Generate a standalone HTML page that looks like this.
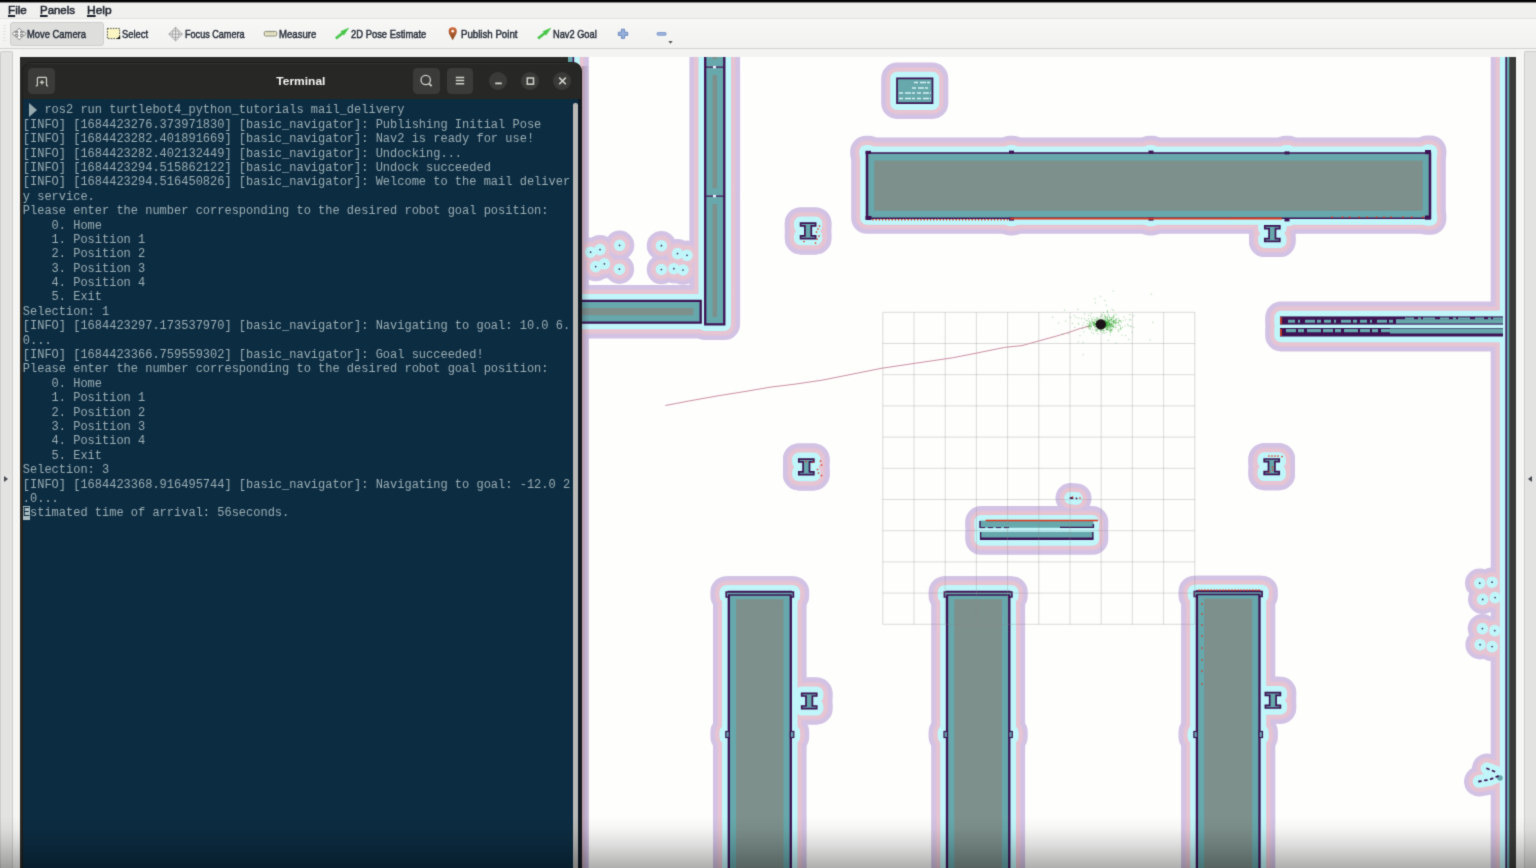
<!DOCTYPE html>
<html><head><meta charset="utf-8"><title>RViz</title>
<style>
*{box-sizing:border-box;margin:0;padding:0}
html,body{width:1536px;height:868px;overflow:hidden;background:#f0f0ef;font-family:"Liberation Sans",sans-serif;}
#root{position:relative;width:1536px;height:868px;overflow:hidden;background:#f1f1f0;filter:url(#soft)}
.abs{position:absolute}
#topbar{left:0;top:0;width:1536px;height:3px;background:linear-gradient(to bottom,#030303 0,#030303 2px,#8e8e8d 2px,#8e8e8d 3px)}
#menubar{left:0;top:3px;width:1536px;height:15px;background:#f0f0ef}
#menubar span{position:absolute;top:-.6px;font-size:11.6px;color:#2a303a;line-height:15px;display:inline-block;transform-origin:0 50%}
#menubar u{text-decoration:underline;text-underline-offset:1px;text-decoration-thickness:1.6px}
#menubar span{-webkit-text-stroke:.5px #1b212b;color:#1b212b}
.tb{-webkit-text-stroke:.42px #1e2530;color:#1e2530}
#toolbar{left:0;top:18px;width:1536px;height:30.5px;background:linear-gradient(to bottom,#f7f7f6,#f2f2f1);border-top:1px solid #e2e2e0;border-bottom:1px solid #d2d2d0}
.tb{position:absolute;top:9.2px;font-size:10.4px;line-height:14px;color:#2a313c;white-space:nowrap;display:inline-block;transform-origin:0 50%}
#mvbtn{left:10.2px;top:3.2px;width:93.8px;height:24.2px;background:#dededd;border:1px solid #cfcfcd;border-radius:3px}
#below{left:0;top:49px;width:1536px;height:8px;background:#f3f3f2}
#lgut{left:0;top:50.5px;width:12.5px;height:830px;background:#e3e3e2;border:1px solid #cdcdcb;border-radius:2px}
#lstrip{left:12.5px;top:49px;width:8px;height:819px;background:#f5f5f4}
#rstrip{left:1516px;top:49px;width:7.5px;height:819px;background:#f6f6f5}
#rgut{left:1523.5px;top:50.5px;width:13px;height:830px;background:#e3e3e2;border:1px solid #cdcdcb;border-radius:2px}
.arr{position:absolute;width:0;height:0;border-top:3.5px solid transparent;border-bottom:3.5px solid transparent}
#map{position:absolute;left:0;top:0}
/* terminal */
#tshadow{left:20px;top:57px;width:547.5px;height:811px;background:#2a2a28}
#twin{left:21.8px;top:62.4px;width:559.8px;height:820px;background:#262624;border-radius:9px 9px 0 0;border:1px solid #1c1c1a;overflow:hidden}
#thead{left:0;top:0;width:560px;height:37px;background:#272725;box-shadow:inset 0 1px 0 #1b1b19,inset 0 2px 0 #32322e}
#ttitle{width:558px;top:11.2px;text-align:center;color:#f4f4f2;font-weight:bold;font-size:11px;line-height:14px;transform:scaleX(1.09);transform-origin:280.4px 50%;left:.7px}
.hb{position:absolute;background:#3b3b39;border-radius:4.5px}
.cb{position:absolute;width:18.4px;height:18.4px;border-radius:50%;background:#3a3a38}
#tbody{left:0;top:37px;width:556.4px;height:790px;background:#0c2c42}
#tright{left:556.4px;top:37px;width:4px;height:790px;background:#101a26}
#ttext{position:absolute;left:1px;top:4px;font-family:"Liberation Mono",monospace;font-size:12px;line-height:14.39px;color:#9aadb2;white-space:pre;letter-spacing:0}
.l0{position:relative;top:-.9px;display:inline-block;height:14.39px;line-height:14.39px;vertical-align:top}
.pr{position:absolute;left:6.6px;top:.3px;width:0;height:0;border-left:8.2px solid #98abb0;border-top:7px solid transparent;border-bottom:7px solid transparent}
.cur{background:#a9bcc0;color:#0c2c42}
#tscroll{left:551.5px;top:40.6px;width:4.9px;height:790px;background:#b9b9b8;border-radius:2.2px 2.2px 0 0}
#tleft{left:0;top:37px;width:1.2px;height:790px;background:#0a1e2e}
#vig{left:0;top:816px;width:1536px;height:52px;background:linear-gradient(to bottom,rgba(0,0,0,0) 0%,rgba(0,0,0,.035) 25%,rgba(0,0,0,.13) 55%,rgba(0,0,0,.31) 100%);pointer-events:none}
#tsh{left:581.6px;top:66px;width:8px;height:802px;background:linear-gradient(to right,rgba(20,10,30,.22),rgba(20,10,30,.1) 50%,rgba(20,10,30,0))}
</style></head>
<body><svg width="0" height="0" style="position:absolute"><defs><filter id="soft" x="0" y="0" width="100%" height="100%" color-interpolation-filters="sRGB"><feConvolveMatrix order="3" kernelMatrix="0.0192 0.1001 0.0192 0.1001 0.5228 0.1001 0.0192 0.1001 0.0192" divisor="1" edgeMode="duplicate" preserveAlpha="true"/></filter></defs></svg><div id="root">
<div class="abs" id="below"></div>
<svg id="map" width="1536" height="868" viewBox="0 0 1536 868">
<defs>
<path id="big" d="M540 30H573V900H540ZM705.2 30H724.3V66.6H705.2ZM705.2 67.6H724.3V195.6H705.2ZM705.2 196.6H724.3V324.3H705.2ZM540 300.8H700.7V322.6H540ZM867 153.2H1430V218H867ZM728.8 592H790.8V900H728.8ZM947 592H1009.3V900H947ZM1196.9 591.5H1259.5V900H1196.9ZM1506.5 30H1560V900H1506.5Z"/>
<path id="bigo" d="M540 30H573V900H540ZM540 300.8H700.7V322.6H540ZM728.8 592H790.8V900H728.8ZM947 592H1009.3V900H947ZM1196.9 591.5H1259.5V900H1196.9ZM1506.5 30H1560V900H1506.5ZM705.2 30H724.3V324.3H705.2Z"/>
<path id="thin" d="M897 78.4H932.5V103.2H897ZM800.6 223.2H815.6V225.9H811.3V235.9H815.6V238.6H800.6V235.9H804.9V225.9H800.6ZM1264.8 225.9H1279.8V228.6H1275.5V238.6H1279.8V241.3H1264.8V238.6H1269.1V228.6H1264.8ZM798.8 459.2H813.8V461.9H809.5V471.9H813.8V474.6H798.8V471.9H803.1V461.9H798.8ZM1264.2 459H1279.2V461.7H1274.9V471.7H1279.2V474.4H1264.2V471.7H1268.5V461.7H1264.2ZM801.7 693.3H816.7V696H812.4V706H816.7V708.7H801.7V706H806V696H801.7ZM1265.4 692.6H1280.4V695.3H1276.1V705.3H1280.4V708H1265.4V705.3H1269.7V695.3H1265.4Z"/>
<path id="shelf" d="M1281 317.4H1503V323.6H1281ZM1281 329.2H1503V335.6H1281ZM981 521.8H1092.5V526.8H981ZM981 533H1092.5V539H981Z"/>
<path id="dots" d="M590.6 252.2h.01M600 249.6h.01M619.6 245.3h.01M595.7 266.6h.01M604.4 263.8h.01M619.4 269.2h.01M661.4 245.7h.01M677.5 253.6h.01M687 255.3h.01M661.4 269.5h.01M673.9 268.7h.01M683 270h.01M1479.7 583.2h.01M1492.1 582.2h.01M1482.7 599.4h.01M1495.1 597.6h.01M1482.4 628.6h.01M1494.7 630.6h.01M1480.1 644.7h.01M1492.1 646.6h.01"/>
<path id="blob" d="M1070.5 498L1076.5 498.4M1479 781.5L1490 779.5L1501 775M1487 768.5L1497 772.5"/>
<path id="extra" d="M726.2 592H793.4V596H726.2ZM726.2 732H728.8V737H726.2ZM790.8 732H793.4V737H790.8ZM944.4 592H1011.9V596H944.4ZM944.4 732H947V737H944.4ZM1009.3 732H1011.9V737H1009.3ZM1194.3 591.5H1262.1V595.5H1194.3ZM1194.3 732H1196.9V737H1194.3ZM1259.5 732H1262.1V737H1259.5ZM1010 151.6H1013V153H1010ZM1010 218H1013V219.6H1010ZM1149.3 151.6H1152.3V153H1149.3ZM1149.3 218H1152.3V219.6H1149.3ZM1285.5 151.6H1288.5V153H1285.5ZM1285.5 218H1288.5V219.6H1285.5ZM866 151.6H869V154H866ZM1427 151.2H1430.6V154H1427ZM1427 216H1430.6V219H1427Z"/>
<path id="ibox" d="M800.6 223.2H815.6V238.6H800.6ZM1264.8 225.9H1279.8V241.3H1264.8ZM798.8 459.2H813.8V474.6H798.8ZM1264.2 459H1279.2V474.4H1264.2ZM801.7 693.3H816.7V708.7H801.7ZM1265.4 692.6H1280.4V708H1265.4Z"/>
<filter id="bl" x="-5%" y="-5%" width="110%" height="110%"><feGaussianBlur stdDeviation=".55"/></filter>
<clipPath id="cb"><use href="#big"/></clipPath>
<clipPath id="view"><rect x="560" y="57" width="956" height="811"/></clipPath>
</defs>
<g clip-path="url(#view)">
<rect x="560" y="57" width="956" height="811" fill="#fefefd"/>
<g fill="none" stroke-linejoin="round" stroke-linecap="round" filter="url(#bl)">
 <g stroke="#d2c2e4"><use href="#big" stroke-width="31.6"/><use href="#extra" stroke-width="31.6"/><use href="#ibox" stroke-width="31.6"/><use href="#thin" stroke-width="31.6"/><use href="#shelf" stroke-width="31.6"/><use href="#dots" stroke-width="29.4"/><use href="#blob" stroke-width="30"/></g>
 <g stroke="#dcc3dc"><use href="#big" stroke-width="23.6"/><use href="#extra" stroke-width="23.6"/><use href="#ibox" stroke-width="23.6"/><use href="#thin" stroke-width="23.2"/><use href="#shelf" stroke-width="23.2"/><use href="#dots" stroke-width="22"/><use href="#blob" stroke-width="22.6"/></g>
 <g stroke="#e7c4d1"><use href="#big" stroke-width="20.6"/><use href="#extra" stroke-width="20.6"/><use href="#ibox" stroke-width="20.6"/><use href="#thin" stroke-width="20.6"/><use href="#shelf" stroke-width="20.6"/><use href="#dots" stroke-width="19.4"/><use href="#blob" stroke-width="20"/></g>
 <g stroke="#c0f6fa"><use href="#big" stroke-width="13.4"/><use href="#extra" stroke-width="13.4"/><use href="#thin" stroke-width="13.4"/><use href="#shelf" stroke-width="13.4"/><use href="#dots" stroke-width="11.6"/><use href="#blob" stroke-width="12.6"/></g>
</g>
<use href="#big" fill="#7d908c"/>
<g clip-path="url(#cb)"><use href="#big" fill="none" stroke="#66a8ac" stroke-width="14.6"/></g>
<use href="#bigo" fill="none" stroke="#3d1254" stroke-width="2.3"/>
<path d="M867 152.4V219M1430 152.4V219" stroke="#3d1254" stroke-width="2.5" fill="none"/>
<path d="M867 153H1430M867 218.2H1430M705.2 67.1H724.3M705.2 196.1H724.3" stroke="#3d1254" stroke-width="1.4" fill="none"/>
<use href="#thin" fill="#66a8ac" stroke="#3d1254" stroke-width="1.7"/>
<g>
<rect x="1280" y="316.4" width="223" height="8.2" fill="#3d1254"/>
<path d="M1288 321.2H1400" stroke="#66a8ac" stroke-width="3" stroke-dasharray="7 3 2 5 10 2 4 3"/>
<path d="M1396 321.4H1503" stroke="#66a8ac" stroke-width="4.4"/>
<path d="M1405 318.6H1503" stroke="#66a8ac" stroke-width="2" stroke-dasharray="9 4 3 2 12 5"/>
<rect x="1280" y="328" width="223" height="8.5" fill="#3d1254"/>
<path d="M1286 330.6H1400" stroke="#66a8ac" stroke-width="3.2" stroke-dasharray="10 2 6 3 14 2"/>
<path d="M1390 331H1503" stroke="#66a8ac" stroke-width="5"/>
<path d="M1281 317v7M1281 329v7" stroke="#d8401f" stroke-width="1.6"/>
<rect x="980" y="520.6" width="113.4" height="7.2" fill="#66a8ac"/>
<path d="M980 521v7M1093.4 524v4M1060 527.4H1093.4" stroke="#3d1254" stroke-width="1.4" fill="none"/>
<path d="M980 527.6H1010" stroke="#3d1254" stroke-width="1" stroke-dasharray="5 3"/>
<rect x="980" y="531.9" width="113.4" height="8" fill="#66a8ac"/>
<path d="M980 538.8H1093.4" stroke="#3d1254" stroke-width="2.4"/>
<path d="M980.6 532v7M1092.8 532v7" stroke="#3d1254" stroke-width="1.3"/>
</g>
<use href="#dots" fill="none" stroke="#3a3060" stroke-width="1.7" stroke-linecap="round"/>
<circle cx="1500" cy="778" r="2.8" fill="#66a8ac"/>
<use href="#blob" fill="none" stroke="#3d1254" stroke-width="1.8" stroke-linecap="round" stroke-dasharray="2 4"/>
<rect x="865.5" y="150.8" width="5.5" height="3.2" fill="#3d1254"/>
<rect x="1425" y="150" width="6" height="4.2" fill="#3d1254"/>
<rect x="1425" y="215.5" width="6" height="4.2" fill="#3d1254"/>
<rect x="865.5" y="216" width="6" height="4" fill="#3d1254"/>
<rect x="1009" y="150.6" width="5" height="3" fill="#3d1254"/>
<rect x="1148.5" y="150.6" width="5" height="3" fill="#3d1254"/>
<rect x="1284.5" y="151.4" width="5" height="3" fill="#3d1254"/>
<rect x="1009" y="217.6" width="5" height="3" fill="#3d1254"/>
<rect x="1148.5" y="217.6" width="5" height="3" fill="#3d1254"/>
<rect x="1284.5" y="218.4" width="5" height="3" fill="#3d1254"/>
<path d="M726.1999999999999 592H793.4V597H790.8V595H728.8V597H726.1999999999999Z" fill="#66a8ac" stroke="#3d1254" stroke-width="1.6"/>
<rect x="725.8" y="731.5" width="3.4" height="6" fill="#66a8ac" stroke="#3d1254" stroke-width="1.2"/>
<rect x="790.4" y="731.5" width="3.4" height="6" fill="#66a8ac" stroke="#3d1254" stroke-width="1.2"/>
<path d="M944.4 592H1011.9V597H1009.3V595H947V597H944.4Z" fill="#66a8ac" stroke="#3d1254" stroke-width="1.6"/>
<rect x="944" y="731.5" width="3.4" height="6" fill="#66a8ac" stroke="#3d1254" stroke-width="1.2"/>
<rect x="1008.9" y="731.5" width="3.4" height="6" fill="#66a8ac" stroke="#3d1254" stroke-width="1.2"/>
<path d="M1194.3000000000002 591.5H1262.1V596.5H1259.5V594.5H1196.9V596.5H1194.3000000000002Z" fill="#66a8ac" stroke="#3d1254" stroke-width="1.6"/>
<rect x="1193.9" y="731.5" width="3.4" height="6" fill="#66a8ac" stroke="#3d1254" stroke-width="1.2"/>
<rect x="1259.1" y="731.5" width="3.4" height="6" fill="#66a8ac" stroke="#3d1254" stroke-width="1.2"/>
<path d="M914 82.6H930" stroke="#d6f0f1" stroke-width="1.5" stroke-dasharray="4 2 6 1 3 2"/>
<path d="M912 88H930" stroke="#d6f0f1" stroke-width="1.5" stroke-dasharray="4 2 6 1 3 2"/>
<path d="M899 93H931" stroke="#d6f0f1" stroke-width="1.5" stroke-dasharray="4 2 6 1 3 2"/>
<path d="M899 98.4H931" stroke="#d6f0f1" stroke-width="1.5" stroke-dasharray="4 2 6 1 3 2"/>
<rect x="567.6" y="56" width="5" height="8" fill="#66a8ac"/>
<rect x="713" y="65.89999999999999" width="3" height="2.4" fill="#eef"/>
<rect x="713" y="194.9" width="3" height="2.4" fill="#eef"/>
<path d="M873.0 219.6h.01M876.2 219.6h.01M879.4 219.6h.01M882.6 219.6h.01M885.8 219.6h.01M889.0 219.6h.01M892.2 219.6h.01M895.4 219.6h.01M898.6 219.6h.01M901.8 219.6h.01M905.0 219.6h.01M908.2 219.6h.01M911.4 219.6h.01M914.6 219.6h.01M917.8 219.6h.01M921.0 219.6h.01M924.2 219.6h.01M927.4 219.6h.01M930.6 219.6h.01M933.8 219.6h.01M937.0 219.6h.01M940.2 219.6h.01M943.4 219.6h.01M946.6 219.6h.01M949.8 219.6h.01M953.0 219.6h.01M956.2 219.6h.01M959.4 219.6h.01M962.6 219.6h.01M965.8 219.6h.01M969.0 219.6h.01M972.2 219.6h.01M975.4 219.6h.01M978.6 219.6h.01M981.8 219.6h.01M985.0 219.6h.01M988.2 219.6h.01M991.4 219.6h.01M994.6 219.6h.01M997.8 219.6h.01M1001.0 219.6h.01M1004.2 219.6h.01M1007.4 219.6h.01M1232.0 218.2h.01M1235.0 218.2h.01M1238.0 218.2h.01M1241.0 218.2h.01M1244.0 218.2h.01M1247.0 218.2h.01M1250.0 218.2h.01M1253.0 218.2h.01M1256.0 218.2h.01M1259.0 218.2h.01M1262.0 218.2h.01M1265.0 218.2h.01M1268.0 218.2h.01M1271.0 218.2h.01M1274.0 218.2h.01M1277.0 218.2h.01M1280.0 218.2h.01M1332.0 217.2h.01M1342.4 217.2h.01M1349.6 217.2h.01M1359.2 217.2h.01M1367.3 217.2h.01M1376.5 217.2h.01M1384.0 217.2h.01M1391.1 217.2h.01M1403.0 217.2h.01M1411.6 217.2h.01M1423.0 217.2h.01M1199.0 590.2h.01M1202.0 590.2h.01M1205.0 590.2h.01M1208.0 590.2h.01M1211.0 590.2h.01M1214.0 590.2h.01M1217.0 590.2h.01M1220.0 590.2h.01M1223.0 590.2h.01M1226.0 590.2h.01M1229.0 590.2h.01M1232.0 590.2h.01M1235.0 590.2h.01M1238.0 590.2h.01M1241.0 590.2h.01M1244.0 590.2h.01M1247.0 590.2h.01M1250.0 590.2h.01M1253.0 590.2h.01M1256.0 590.2h.01M1259.0 590.2h.01M1202.0 604.0h.01M1202.0 614.0h.01M1202.0 625.0h.01M1202.0 636.0h.01M1202.0 648.0h.01M1202.0 660.0h.01M1202.0 671.0h.01M1202.0 684.0h.01M819.5 226.0h.01M818.0 229.0h.01M816.5 232.0h.01M819.0 236.0h.01M817.0 239.0h.01M804.0 241.5h.01M815.5 243.0h.01M820.5 461.0h.01M821.5 465.0h.01M817.5 469.5h.01M818.5 473.0h.01M821.5 475.5h.01M806.0 461.5h.01M813.2 462.0h.01M1269.0 456.0h.01M1272.0 456.0h.01M1275.0 456.0h.01M1278.0 456.0h.01M1282.0 456.5h.01M1272.5 467.0h.01M1272.5 470.0h.01M1269.0 472.0h.01M1072.5 497.0h.01M1080.0 498.0h.01" fill="none" stroke="#e0371c" stroke-width="1.7" stroke-linecap="round"/>
<path d="M1010 218.6H1282" stroke="#d9391f" stroke-width="1.6"/>
<path d="M985.6 520.4H1098" stroke="#e0371c" stroke-width="1.5"/>
<path d="M882.8 312.3V624.3M882.8 312.3H1194.8M914.0 312.3V624.3M882.8 343.5H1194.8M945.2 312.3V624.3M882.8 374.7H1194.8M976.4 312.3V624.3M882.8 405.9H1194.8M1007.6 312.3V624.3M882.8 437.1H1194.8M1038.8 312.3V624.3M882.8 468.3H1194.8M1070.0 312.3V624.3M882.8 499.5H1194.8M1101.2 312.3V624.3M882.8 530.7H1194.8M1132.4 312.3V624.3M882.8 561.9H1194.8M1163.6 312.3V624.3M882.8 593.1H1194.8M1194.8 312.3V624.3M882.8 624.3H1194.8" fill="none" stroke="#8c8c8c" stroke-opacity=".3" stroke-width="1"/>
<path d="M665.3 405.5L690 400.8L718 395.8L745 391.5L770 387.2L796 384L822 380.2L852 374.2L882 368.2L917 363L952.5 357.8L978 352.8L1004.6 347.4L1022 345.6L1040 340.6L1056 336.2L1070 332L1080 328.5L1090 326" fill="none" stroke="#cc8fa3" stroke-width="1"/>
<path d="M1101.7 324.4h.9M1100.4 326.3h.9M1112.7 326.9h.9M1106.0 322.6h.9M1084.2 318.7h.9M1119.9 325.6h.9M1101.9 325.7h.9M1096.3 322.3h.9M1105.7 325.1h.9M1088.0 328.1h.9M1105.2 320.7h.9M1092.8 322.5h.9M1102.4 324.9h.9M1103.8 322.2h.9M1104.4 316.3h.9M1098.1 326.4h.9M1107.1 321.8h.9M1102.6 323.4h.9M1107.4 316.8h.9M1099.2 320.8h.9M1105.6 324.6h.9M1100.2 327.7h.9M1093.7 324.3h.9M1110.8 321.3h.9M1118.2 323.1h.9M1103.3 327.5h.9M1108.8 323.4h.9M1100.2 323.0h.9M1095.8 321.0h.9M1105.8 320.0h.9M1110.0 326.0h.9M1105.3 325.2h.9M1104.8 324.5h.9M1102.9 325.7h.9M1101.9 325.4h.9M1111.1 323.9h.9M1113.0 327.4h.9M1102.4 326.0h.9M1077.9 323.2h.9M1108.7 324.4h.9M1100.0 328.0h.9M1100.6 322.0h.9M1104.8 324.8h.9M1104.2 322.0h.9M1103.2 325.0h.9M1102.3 325.9h.9M1112.2 325.0h.9M1101.4 325.5h.9M1101.8 325.1h.9M1089.3 323.3h.9M1114.8 321.7h.9M1086.7 326.7h.9M1114.0 322.7h.9M1108.5 322.7h.9M1106.6 323.5h.9M1107.2 322.1h.9M1109.3 329.1h.9M1097.6 323.0h.9M1112.7 317.5h.9M1100.5 328.5h.9M1104.5 325.2h.9M1094.6 323.7h.9M1083.5 322.9h.9M1104.1 324.6h.9M1111.4 329.3h.9M1099.0 324.9h.9M1115.2 327.8h.9M1102.3 324.2h.9M1115.5 319.5h.9M1095.2 324.0h.9M1090.8 326.3h.9M1107.8 322.3h.9M1113.7 316.6h.9M1099.7 325.1h.9M1106.5 319.2h.9M1101.3 322.3h.9M1103.7 333.2h.9M1102.2 324.2h.9M1098.0 323.6h.9M1100.0 326.1h.9M1112.6 324.0h.9M1093.7 324.9h.9M1103.9 325.8h.9M1102.9 323.6h.9M1112.6 316.8h.9M1105.6 322.4h.9M1101.6 322.7h.9M1102.4 322.6h.9M1120.3 327.8h.9M1094.6 326.4h.9M1102.7 324.2h.9M1106.1 326.1h.9M1103.9 322.5h.9M1107.6 328.7h.9M1102.8 323.6h.9M1101.0 324.1h.9M1096.4 324.8h.9M1091.8 321.4h.9M1101.9 319.3h.9M1098.6 327.0h.9M1103.0 330.6h.9M1106.1 321.8h.9M1103.2 324.2h.9M1100.7 327.0h.9M1102.6 330.2h.9M1102.8 324.8h.9M1106.5 328.8h.9M1103.8 324.8h.9M1101.9 325.2h.9M1088.9 321.7h.9M1096.0 324.0h.9M1118.1 331.5h.9M1118.2 318.2h.9M1108.3 320.6h.9M1109.1 317.3h.9M1111.2 319.7h.9M1103.1 324.0h.9M1102.5 322.4h.9M1089.8 326.3h.9M1100.6 324.0h.9M1101.9 323.4h.9M1102.0 325.2h.9M1096.6 323.4h.9M1099.5 319.9h.9M1103.6 325.0h.9M1096.5 330.7h.9M1099.3 320.9h.9M1097.1 329.8h.9M1106.7 323.8h.9M1129.5 320.0h.9M1087.8 325.6h.9M1109.7 324.5h.9M1111.6 324.5h.9M1089.9 322.9h.9M1103.1 324.4h.9M1101.2 324.5h.9M1101.1 326.5h.9M1102.9 323.6h.9M1113.5 320.5h.9M1096.8 326.6h.9M1102.6 327.5h.9M1102.5 326.0h.9M1103.6 324.6h.9M1113.6 322.0h.9M1114.8 320.4h.9M1107.2 323.7h.9M1100.3 326.5h.9M1106.2 326.4h.9M1109.9 323.8h.9M1096.3 329.7h.9M1104.1 326.4h.9M1108.0 325.0h.9M1104.7 327.0h.9M1106.9 326.1h.9M1101.1 315.4h.9M1095.9 324.5h.9M1110.6 324.4h.9M1097.1 321.1h.9M1102.8 322.1h.9M1107.8 321.2h.9M1115.8 318.9h.9M1102.2 325.6h.9M1109.2 323.5h.9M1103.1 325.7h.9M1092.2 319.3h.9M1094.1 323.2h.9M1104.3 323.2h.9M1100.9 325.1h.9M1099.9 323.2h.9M1103.2 326.2h.9M1107.7 322.5h.9M1085.6 326.0h.9M1096.3 331.3h.9M1100.7 324.0h.9M1101.3 329.8h.9M1100.3 324.0h.9M1095.1 324.9h.9M1092.9 333.4h.9M1104.1 326.5h.9M1104.2 326.6h.9M1107.2 327.8h.9M1107.3 324.2h.9M1110.9 323.1h.9M1115.1 323.8h.9M1105.5 321.8h.9M1099.3 325.7h.9M1102.5 322.9h.9M1118.5 330.0h.9M1110.0 319.6h.9M1098.8 325.9h.9M1106.6 324.4h.9M1103.3 323.2h.9M1105.8 323.4h.9M1115.8 320.7h.9M1100.9 329.6h.9M1103.6 327.8h.9M1113.5 323.1h.9M1104.9 323.6h.9M1097.8 322.9h.9M1103.7 323.0h.9M1093.9 321.8h.9M1097.4 326.3h.9M1105.0 326.7h.9M1099.5 326.5h.9M1097.4 333.8h.9M1099.7 323.2h.9M1103.3 323.1h.9M1111.0 318.7h.9M1097.1 322.3h.9M1106.4 329.6h.9M1094.1 321.4h.9M1110.8 324.0h.9M1105.9 325.0h.9M1107.3 319.7h.9M1109.0 327.5h.9M1081.1 318.6h.9M1100.8 327.7h.9M1120.4 329.6h.9M1105.2 325.0h.9M1095.7 321.8h.9M1098.5 321.2h.9M1105.4 326.2h.9M1099.2 323.9h.9M1107.6 326.5h.9M1100.6 327.7h.9M1099.1 324.6h.9M1083.4 331.8h.9M1110.3 330.4h.9M1089.4 328.9h.9M1108.5 327.0h.9M1112.3 326.6h.9M1096.2 324.8h.9M1120.4 328.4h.9M1103.9 324.6h.9M1074.4 327.5h.9M1098.2 325.5h.9M1102.3 323.3h.9M1108.9 320.2h.9M1101.9 323.7h.9M1102.1 323.5h.9M1103.6 320.8h.9M1104.5 324.7h.9M1096.1 324.5h.9M1098.0 322.7h.9M1088.4 324.7h.9M1104.9 317.4h.9M1106.0 325.2h.9M1100.3 324.5h.9M1101.7 323.3h.9M1112.7 325.8h.9M1105.6 324.1h.9M1104.1 326.7h.9M1125.4 319.8h.9M1118.2 321.9h.9M1101.8 323.9h.9M1111.0 330.2h.9M1101.5 324.1h.9M1105.4 327.1h.9M1104.3 327.6h.9M1096.6 323.1h.9M1093.0 322.7h.9M1104.8 323.4h.9M1103.8 323.3h.9M1102.1 322.6h.9M1102.1 324.1h.9M1115.5 322.8h.9M1102.8 325.0h.9M1088.6 326.0h.9M1100.4 322.6h.9M1103.5 324.8h.9M1102.6 324.1h.9M1090.9 326.8h.9M1103.6 322.9h.9M1104.8 318.3h.9M1088.7 321.0h.9M1093.3 325.3h.9M1105.9 323.2h.9M1105.1 325.7h.9M1115.0 322.7h.9M1096.1 322.8h.9M1100.7 325.0h.9M1105.4 321.8h.9M1102.0 314.5h.9M1099.0 325.1h.9M1102.8 324.3h.9M1111.3 318.1h.9M1104.5 319.3h.9M1102.8 323.7h.9M1102.2 324.9h.9M1118.7 321.0h.9M1102.0 328.1h.9M1097.5 318.8h.9M1096.7 317.4h.9M1099.9 320.4h.9M1107.6 325.3h.9M1108.3 325.8h.9M1106.4 325.9h.9M1098.9 321.4h.9M1094.9 328.9h.9M1119.0 320.5h.9M1117.6 329.7h.9M1108.9 323.1h.9M1091.6 320.3h.9M1106.4 324.6h.9M1108.5 324.4h.9M1099.8 321.5h.9M1109.3 320.1h.9M1098.6 325.2h.9M1095.3 323.7h.9M1120.1 328.1h.9M1103.0 321.5h.9M1099.7 324.3h.9M1101.3 326.2h.9M1108.9 323.9h.9M1103.8 324.9h.9M1102.4 321.3h.9M1095.9 324.1h.9M1114.4 326.9h.9M1105.4 322.7h.9M1102.7 325.3h.9M1102.3 316.7h.9M1100.5 328.5h.9M1104.8 325.8h.9M1097.7 323.7h.9M1103.9 325.9h.9M1111.6 319.5h.9M1103.7 324.7h.9M1107.8 326.9h.9M1122.1 327.2h.9M1107.9 315.4h.9M1108.4 325.7h.9M1110.2 326.1h.9M1097.9 322.4h.9M1099.4 324.8h.9M1093.3 322.5h.9M1103.4 326.5h.9M1101.7 322.8h.9M1088.7 327.1h.9M1105.2 320.4h.9M1101.0 330.5h.9M1097.9 322.0h.9M1101.2 322.3h.9M1130.4 326.3h.9M1104.5 323.1h.9M1093.0 322.8h.9M1095.5 319.4h.9M1109.8 332.2h.9M1106.4 322.4h.9M1102.6 324.9h.9M1099.6 325.1h.9M1104.2 326.0h.9M1078.5 324.3h.9M1107.0 326.1h.9M1088.1 318.8h.9M1103.9 324.3h.9M1107.3 318.9h.9M1104.9 321.2h.9M1099.9 331.2h.9M1109.0 324.1h.9M1102.2 328.6h.9M1096.2 318.2h.9M1116.3 319.0h.9M1110.7 329.6h.9M1119.1 324.9h.9M1105.1 325.7h.9M1103.0 322.3h.9M1108.6 330.6h.9M1102.7 318.8h.9M1101.3 325.6h.9M1099.0 320.1h.9M1102.9 328.0h.9M1110.5 325.7h.9M1090.7 323.1h.9M1101.1 324.1h.9M1092.8 324.9h.9M1112.7 325.5h.9M1097.0 319.8h.9M1104.7 323.9h.9M1101.8 322.7h.9M1105.7 323.0h.9M1106.4 330.1h.9M1099.0 322.9h.9M1096.1 324.0h.9M1113.2 322.0h.9M1102.3 324.7h.9M1106.5 321.6h.9M1110.7 325.4h.9M1104.7 324.0h.9M1108.8 321.0h.9M1095.3 320.2h.9M1100.0 321.5h.9M1106.4 325.6h.9M1097.2 321.8h.9M1104.7 318.3h.9M1102.5 324.2h.9M1110.1 323.6h.9M1104.6 320.3h.9M1093.9 325.7h.9M1121.1 322.2h.9M1103.2 324.1h.9M1103.8 324.0h.9M1109.9 324.9h.9M1102.4 323.7h.9M1111.5 331.0h.9M1099.0 323.6h.9M1097.2 321.9h.9M1106.2 324.1h.9M1102.7 323.8h.9M1107.9 327.1h.9M1109.8 326.5h.9M1112.3 329.1h.9M1095.6 320.4h.9M1117.3 322.6h.9M1102.8 330.3h.9M1097.0 324.0h.9M1110.2 317.5h.9M1089.7 329.2h.9M1113.3 320.3h.9M1095.3 324.2h.9M1112.8 322.1h.9M1092.5 322.5h.9M1108.3 314.6h.9M1100.6 324.1h.9M1103.5 321.2h.9M1089.0 325.5h.9M1103.0 320.0h.9M1106.2 317.9h.9M1114.8 320.1h.9M1108.0 329.6h.9M1099.4 322.8h.9M1109.7 330.8h.9M1097.2 327.9h.9M1100.5 323.2h.9M1117.4 325.4h.9M1093.8 322.7h.9M1088.7 326.9h.9M1098.7 329.4h.9M1103.6 325.0h.9M1082.2 328.3h.9M1108.2 324.8h.9M1104.2 330.6h.9M1107.5 322.7h.9M1108.5 324.4h.9M1102.8 325.2h.9M1110.3 319.5h.9M1098.5 319.8h.9M1103.0 323.4h.9M1098.6 325.5h.9M1103.0 327.9h.9M1106.7 327.7h.9M1102.1 324.0h.9M1105.5 326.0h.9M1109.6 328.3h.9M1105.0 322.8h.9M1107.0 319.5h.9M1103.9 325.2h.9M1102.5 325.7h.9M1098.1 326.1h.9M1103.9 325.1h.9M1106.1 325.9h.9M1093.4 317.2h.9M1099.8 329.4h.9M1127.2 324.5h.9M1102.4 324.8h.9M1102.5 325.9h.9M1101.5 324.9h.9M1103.4 324.5h.9M1103.6 327.6h.9M1103.0 321.4h.9M1104.6 324.3h.9M1102.7 323.4h.9M1086.6 320.9h.9M1100.8 325.5h.9M1100.8 324.8h.9M1104.1 321.8h.9M1103.3 327.2h.9M1100.3 325.3h.9M1100.2 324.6h.9M1109.0 320.4h.9M1099.0 322.6h.9M1122.6 320.7h.9M1101.8 324.1h.9M1105.3 327.5h.9M1105.1 322.5h.9M1103.7 323.2h.9M1094.3 323.3h.9M1111.7 326.3h.9M1093.8 324.7h.9M1099.0 323.5h.9M1098.4 322.8h.9M1090.7 325.4h.9M1090.2 325.0h.9M1101.3 324.3h.9M1113.2 321.7h.9M1107.5 322.8h.9M1105.1 324.8h.9M1094.8 324.6h.9M1098.6 324.2h.9M1118.5 320.2h.9M1113.4 320.3h.9M1099.3 322.1h.9M1113.2 321.3h.9M1112.9 322.7h.9M1098.7 322.3h.9M1100.6 327.8h.9M1104.7 325.4h.9M1103.3 325.3h.9M1099.3 322.5h.9M1105.7 329.2h.9M1090.4 322.1h.9M1104.1 324.4h.9M1103.2 324.1h.9M1097.0 322.7h.9M1102.2 325.8h.9M1104.4 323.3h.9M1099.2 325.2h.9M1108.8 323.6h.9M1098.0 327.5h.9M1107.1 317.1h.9M1102.5 322.3h.9M1103.3 324.9h.9M1117.9 323.0h.9M1078.3 318.0h.9M1107.7 321.0h.9M1101.1 319.6h.9M1092.0 323.4h.9M1094.9 323.6h.9M1102.9 326.1h.9M1105.6 322.6h.9M1113.0 317.9h.9M1124.6 326.0h.9M1100.8 323.4h.9M1065.0 321.1h.9M1099.9 325.7h.9M1098.7 318.3h.9M1100.4 325.2h.9M1120.0 321.4h.9M1103.2 323.9h.9M1111.0 329.7h.9M1113.9 314.8h.9M1106.5 321.7h.9M1102.0 325.1h.9M1107.1 329.4h.9M1088.9 323.5h.9M1100.5 324.8h.9M1100.6 321.0h.9M1097.1 321.9h.9M1091.3 324.1h.9M1070.1 317.4h.9M1104.1 324.7h.9M1097.9 324.5h.9M1107.2 319.4h.9M1100.9 323.4h.9M1104.6 327.5h.9M1093.8 325.0h.9M1101.0 322.4h.9M1103.3 331.9h.9M1105.3 324.1h.9M1098.5 324.5h.9M1105.5 324.8h.9M1100.9 325.6h.9M1104.8 321.5h.9M1107.4 323.6h.9M1110.8 327.4h.9M1105.1 325.5h.9M1103.2 328.4h.9M1102.8 323.8h.9M1102.1 322.7h.9M1099.2 325.5h.9M1109.8 331.0h.9M1110.1 332.6h.9M1102.3 325.9h.9M1103.2 322.9h.9M1101.8 325.9h.9M1098.2 323.3h.9M1101.2 324.3h.9M1095.6 326.8h.9M1103.5 324.4h.9M1097.0 326.6h.9M1102.1 324.9h.9M1101.8 327.0h.9M1106.8 317.7h.9M1109.0 324.0h.9M1092.3 329.5h.9M1102.8 322.5h.9M1109.9 330.0h.9M1101.7 324.9h.9M1102.5 325.7h.9M1097.1 322.3h.9M1085.8 320.4h.9M1094.9 330.9h.9M1102.4 324.4h.9M1109.2 325.2h.9M1104.6 324.4h.9M1101.9 322.9h.9M1107.5 320.8h.9M1111.4 321.8h.9M1109.1 317.8h.9M1089.5 324.6h.9M1103.8 324.4h.9M1099.5 323.9h.9M1096.2 321.6h.9M1095.2 326.4h.9M1107.6 325.4h.9M1103.0 322.0h.9M1096.6 328.9h.9M1099.7 327.6h.9M1104.4 320.7h.9M1102.5 320.7h.9M1100.7 326.5h.9M1105.5 326.9h.9M1110.0 328.1h.9M1106.9 328.0h.9M1104.6 324.1h.9M1112.7 326.5h.9M1102.6 324.5h.9M1092.3 321.7h.9M1102.5 327.2h.9M1112.5 318.0h.9M1100.3 320.3h.9M1109.2 321.0h.9M1106.8 326.8h.9M1097.8 327.2h.9M1107.1 324.3h.9M1106.1 323.7h.9M1099.0 324.9h.9M1100.8 323.4h.9M1112.4 323.6h.9M1101.8 323.6h.9M1103.1 323.1h.9M1101.5 323.3h.9M1096.9 323.3h.9M1100.5 325.0h.9M1100.0 326.1h.9M1109.1 325.5h.9M1115.8 323.1h.9M1101.4 323.1h.9M1099.1 322.9h.9M1098.5 326.2h.9M1102.4 323.8h.9M1094.4 327.1h.9M1095.9 323.4h.9M1107.0 322.5h.9M1103.5 324.2h.9M1094.5 323.7h.9M1101.6 324.5h.9M1099.1 326.0h.9M1103.5 322.2h.9M1102.0 324.1h.9M1104.1 322.9h.9M1104.1 320.2h.9M1115.5 327.1h.9M1105.9 329.2h.9M1090.1 326.1h.9M1109.3 322.8h.9M1101.0 323.8h.9M1105.9 325.4h.9M1114.1 322.3h.9M1098.4 323.9h.9M1106.3 322.6h.9M1106.1 322.4h.9M1107.1 325.5h.9M1102.9 325.9h.9M1109.7 326.3h.9M1106.7 324.2h.9M1099.9 324.4h.9M1102.5 325.1h.9M1090.4 327.9h.9M1105.4 322.2h.9M1101.9 327.2h.9M1103.5 324.4h.9M1093.4 323.1h.9M1095.6 330.1h.9M1104.8 324.3h.9M1100.9 325.0h.9M1098.8 323.8h.9M1099.9 324.1h.9M1104.3 314.8h.9M1105.0 323.7h.9M1094.2 319.3h.9M1100.2 323.2h.9M1094.9 326.9h.9M1092.7 324.3h.9M1102.6 327.0h.9M1082.3 325.4h.9M1101.3 326.3h.9M1103.3 320.8h.9M1100.0 326.2h.9M1097.9 324.0h.9M1099.9 324.8h.9M1112.1 321.5h.9M1111.0 325.3h.9M1099.8 325.1h.9M1110.8 319.6h.9M1096.5 325.2h.9M1108.5 322.1h.9M1107.7 321.4h.9M1105.6 332.8h.9M1098.5 321.7h.9M1101.9 325.2h.9M1091.0 332.1h.9M1090.1 316.1h.9M1100.5 321.4h.9M1129.3 314.6h.9M1111.4 320.7h.9M1077.4 309.4h.9M1099.4 325.3h.9M1110.8 326.1h.9M1105.0 316.3h.9M1113.0 310.4h.9M1075.5 317.5h.9M1073.7 315.5h.9M1088.2 315.1h.9M1103.0 312.5h.9M1095.0 302.9h.9M1107.1 311.7h.9M1112.6 291.0h.9M1087.0 323.6h.9M1052.2 317.2h.9M1106.0 322.1h.9M1072.3 323.4h.9M1107.2 310.7h.9M1119.8 320.5h.9M1104.4 316.2h.9M1115.6 322.0h.9M1128.1 325.8h.9M1090.9 318.6h.9M1123.5 317.1h.9M1112.1 326.5h.9M1100.2 296.3h.9M1106.8 323.3h.9M1106.9 312.9h.9M1129.7 319.6h.9M1090.7 313.4h.9M1111.6 309.4h.9M1082.7 342.3h.9M1131.9 332.2h.9M1133.0 327.3h.9M1068.1 333.7h.9M1130.4 326.2h.9M1062.4 334.2h.9M1133.1 315.8h.9M1106.7 329.3h.9M1102.2 332.7h.9M1105.7 328.4h.9M1105.8 305.2h.9M1082.8 354.7h.9M1109.9 335.0h.9M1128.3 339.3h.9M1115.8 314.6h.9M1104.4 300.5h.9M1100.0 330.7h.9M1057.9 323.1h.9M1121.6 335.2h.9M1084.2 314.0h.9M1064.0 310.1h.9M1115.4 343.1h.9M1079.5 335.7h.9M1113.1 315.7h.9M1150.9 294.1h.9M1102.6 323.3h.9M1149.5 340.2h.9M1152.4 322.4h.9M1125.0 335.6h.9M1114.9 324.8h.9M1100.1 316.6h.9M1077.7 341.8h.9M1094.5 298.8h.9M1109.6 320.6h.9M1107.8 340.4h.9" fill="none" stroke="#35a832" stroke-opacity=".6" stroke-width=".9"/>
<circle cx="1100.8" cy="324.4" r="5.2" fill="#1c1418"/>
<rect x="1506.9" y="57" width="2.6" height="811" fill="#66a8ac"/>
<rect x="1509.3" y="57" width="7.2" height="811" fill="#3a3a38"/>
</g>
</svg>
<div class="abs" id="topbar"></div>
<div class="abs" id="menubar">
 <span style="left:8.3px;transform:scaleX(1.005)"><u>F</u>ile</span><span style="left:39.6px;transform:scaleX(.986)"><u>P</u>anels</span><span style="left:86.7px;transform:scaleX(1.03)"><u>H</u>elp</span>
</div>
<div class="abs" id="toolbar">
 <div class="abs" style="left:2.5px;top:6px;width:3px;height:18px;background:repeating-linear-gradient(to bottom,#dcdcda 0 1px,transparent 1px 3px);opacity:.7"></div>
 <div class="abs" id="mvbtn"></div>
 
 <svg class="abs" style="left:0;top:-19px" width="700" height="50" viewBox="0 0 700 50">
  <!-- move camera -->
  <path d="M19.2 28.2l3.2 3.3h-1.9v1.4h2.6v-1.9l3 2.7-3 2.7v-1.9h-2.6v2.1h1.9l-3.2 3.3-3.2-3.3h1.9v-2.1h-2.6v1.9l-3-2.7 3-2.7v1.9h2.6v-1.4h-1.9z" fill="#fafafa" stroke="#7d7d7d" stroke-width=".9" stroke-linejoin="round"/>
  <!-- select -->
  <rect x="107.4" y="28.4" width="12.2" height="10.2" fill="#faf5c2" stroke="#55554a" stroke-width="1" stroke-dasharray="1.6 1.1"/>
  <path d="M120.1 35.8V39.1H116.6Z" fill="#111"/>
  <!-- focus -->
  <g fill="none" stroke="#8f8f8f" stroke-width=".9" opacity=".9">
   <path d="M175.6 27.4L182.4 34.1L175.6 40.8L168.8 34.1Z"/>
   <circle cx="175.6" cy="34.1" r="3.6"/>
   <path d="M175.6 27.4V40.8M168.8 34.1H182.4"/>
  </g>
  <!-- measure -->
  <rect x="264.3" y="31.4" width="12.4" height="4.6" rx="1.2" fill="#e9e7c4" stroke="#88887a" stroke-width="1"/>
  <path d="M267 32v1.8M269.2 32v1.8M271.4 32v1.8M273.6 32v1.8" stroke="#b8b8a0" stroke-width=".7"/>
  <!-- green arrows -->
  <path id="garr" d="M335.3 37.4L341.6 32.4L340.8 31.4L348.7 28.1L343.8 35.2L343 34.2L336.7 39.2Z" fill="#48c648" stroke="#48c648" stroke-width=".5" stroke-linejoin="round"/>
  <path d="M335.3 37.4L341.6 32.4L340.8 31.4L348.7 28.1L343.8 35.2L343 34.2L336.7 39.2Z" fill="#48c648" stroke="#48c648" stroke-width=".5" stroke-linejoin="round" transform="translate(202.2 0)"/>
  <!-- pin -->
  <defs><linearGradient id="pg" x1="0" y1="0" x2="0" y2="1"><stop offset="0" stop-color="#cf6a3c"/><stop offset="1" stop-color="#84481c"/></linearGradient></defs>
  <path d="M452.7 40.2C451 36.6 448.6 34.2 448.6 31.4A4.1 4.1 0 0 1 456.8 31.4C456.8 34.2 454.4 36.6 452.7 40.2Z" fill="url(#pg)"/>
  <circle cx="452.7" cy="31.2" r="1.35" fill="#fff6ee"/>
  <!-- plus / minus -->
  <path d="M621.4 29.2h3.2v3h3.1v3.2h-3.1v3h-3.2v-3h-3.1v-3.2h3.1z" fill="#95b0dc" stroke="#5c7cb6" stroke-width=".8" stroke-linejoin="round"/>
  <rect x="657.2" y="32.6" width="8.8" height="2.6" rx=".6" fill="#a3bbe2" stroke="#6a88c0" stroke-width=".8"/>
  <path d="M668.4 41.3h4.2l-2.1 2.3z" fill="#333"/>
 </svg>
 <span class="tb" style="left:27.3px;transform:scaleX(.9035)">Move Camera</span>
 <span class="tb" style="left:121.9px;transform:scaleX(.903)">Select</span>
 <span class="tb" style="left:184.5px;transform:scaleX(.874)">Focus Camera</span>
 <span class="tb" style="left:278.6px;transform:scaleX(.922)">Measure</span>
 <span class="tb" style="left:350.6px;transform:scaleX(.906)">2D Pose Estimate</span>
 <span class="tb" style="left:461px;transform:scaleX(.931)">Publish Point</span>
 <span class="tb" style="left:552.8px;transform:scaleX(.89)">Nav2 Goal</span>
</div>
<div class="abs" id="lgut"><div class="arr" style="left:3px;top:424.5px;border-left:4.5px solid #44484e"></div></div>
<div class="abs" id="lstrip"></div>
<div class="abs" id="rstrip"></div>
<div class="abs" id="rgut"><div class="arr" style="left:3px;top:424.5px;border-right:4.5px solid #44484e"></div></div>

<div class="abs" id="tsh"></div>
<div class="abs" id="tshadow"></div>
<div class="abs" id="twin"><div class="abs" style="left:-1px;top:-1px">
 <div class="abs" id="thead">
  <div class="abs" id="ttitle">Terminal</div>
  
  <div class="hb" style="left:6.3px;top:5.7px;width:26.8px;height:25.8px"></div>
  <div class="hb" style="left:391.2px;top:5.7px;width:27px;height:25.8px"></div>
  <div class="hb" style="left:424.8px;top:5.7px;width:26.8px;height:25.8px"></div>
  <div class="cb" style="left:467.2px;top:9.2px"></div>
  <div class="cb" style="left:499.1px;top:9.2px"></div>
  <div class="cb" style="left:531.2px;top:9.2px"></div>
  <svg class="abs" style="left:-21.8px;top:-62.4px" width="600" height="110" viewBox="0 0 600 110" fill="none" stroke="#d2d2cc" stroke-linecap="butt">
   <path d="M35.8 85.8H36.6Q37.4 85.8 37.4 85V78.4Q37.4 77.4 38.4 77.4H45.5Q46.5 77.4 46.5 78.4V85Q46.5 85.8 47.3 85.8H48.1" stroke-width="1.2"/>
   <path d="M41.95 80.3V84.5M39.85 82.4H44.05" stroke-width="1.3"/>
   <circle cx="425.7" cy="80" r="4.7" stroke-width="1.25"/>
   <path d="M429.2 83.6L431.6 86.2" stroke-width="1.7"/>
   <path d="M455.8 77.5H464.2M455.8 80.6H464.2M455.8 83.8H464.2" stroke-width="1.5"/>
   <path d="M495.2 83.4H501.8" stroke-width="1.6"/>
   <rect x="527.3" y="78" width="6.2" height="6.2" stroke-width="1.5"/>
   <path d="M559.2 77.6L565.8 84.2M565.8 77.6L559.2 84.2" stroke-width="1.6"/>
  </svg>
 </div>
 <div class="abs" id="tbody"><div id="ttext"><span class="l0"><span class="pr"></span>   ros2 run turtlebot4_python_tutorials mail_delivery</span>
[INFO] [1684423276.373971830] [basic_navigator]: Publishing Initial Pose
[INFO] [1684423282.401891669] [basic_navigator]: Nav2 is ready for use!
[INFO] [1684423282.402132449] [basic_navigator]: Undocking...
[INFO] [1684423294.515862122] [basic_navigator]: Undock succeeded
[INFO] [1684423294.516450826] [basic_navigator]: Welcome to the mail deliver
y service.
Please enter the number corresponding to the desired robot goal position:
    0. Home
    1. Position 1
    2. Position 2
    3. Position 3
    4. Position 4
    5. Exit
Selection: 1
[INFO] [1684423297.173537970] [basic_navigator]: Navigating to goal: 10.0 6.
0...
[INFO] [1684423366.759559302] [basic_navigator]: Goal succeeded!
Please enter the number corresponding to the desired robot goal position:
    0. Home
    1. Position 1
    2. Position 2
    3. Position 3
    4. Position 4
    5. Exit
Selection: 3
[INFO] [1684423368.916495744] [basic_navigator]: Navigating to goal: -12.0 2
.0...
<span class="cur">E</span>stimated time of arrival: 56seconds.</div></div>
 <div class="abs" id="tleft"></div><div class="abs" id="tright"></div>
 <div class="abs" id="tscroll"></div>
</div></div>
<div class="abs" id="vig"></div>
</div></body></html>
